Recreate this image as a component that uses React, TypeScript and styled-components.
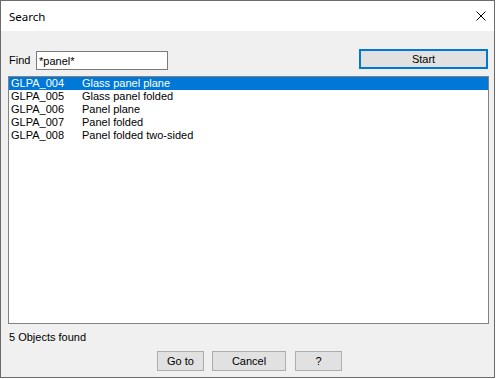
import React, { useState } from 'react'
import styled, { createGlobalStyle } from 'styled-components'

const GlobalStyle = createGlobalStyle`
  html, body {
    margin: 0;
    padding: 0;
    background: #fff;
  }
  * {
    box-sizing: border-box;
  }
`

const Window = styled.div`
  width: 495px;
  height: 378px;
  border: 1px solid #6b6b6b;
  display: flex;
  flex-direction: column;
  font-family: 'Liberation Sans', Arial, sans-serif;
  font-size: 11px;
  color: #000;
`

const TitleBar = styled.div`
  height: 30px;
  flex: none;
  background: #fff;
  display: flex;
  align-items: center;
  padding: 0 8px 0 8px;
  font-family: 'Noto Sans', sans-serif;
  font-size: 11.5px;
`

const CloseIcon = styled.svg`
  margin-left: auto;
  display: block;
`

const Body = styled.div`
  flex: 1;
  background: #f0f0f0;
  display: flex;
  flex-direction: column;
  padding: 18px 5px 6px 7px;
`

const FindRow = styled.div`
  height: 20px;
  display: flex;
  align-items: flex-start;
`

const Label = styled.label`
  width: 28px;
  padding-left: 1px;
  margin-top: 2px;
  line-height: 19px;
`

const Input = styled.input`
  width: 132px;
  height: 19px;
  margin: 2px 0 0;
  padding: 0 2px;
  border: 1px solid #7a7a7a;
  background: #fff;
  font: inherit;
  color: #000;
  outline: none;
`

const Button = styled.button<{ $w: number; $primary?: boolean }>`
  width: ${(p) => p.$w}px;
  height: 20px;
  padding: 0;
  background: #e1e1e1;
  border: ${(p) => (p.$primary ? '2px solid #0078d7' : '1px solid #adadad')};
  font: inherit;
  color: #000;
  line-height: 16px;
  cursor: pointer;
`

const StartButton = styled(Button)`
  margin-left: auto;
  margin-right: 1px;
`

const List = styled.div`
  margin-top: 7px;
  width: 481px;
  height: 248px;
  border: 1px solid #828282;
  background: #fff;
  overflow: hidden;
`

const Row = styled.div<{ $selected?: boolean }>`
  height: 13px;
  line-height: 13px;
  display: flex;
  padding-left: 2px;
  background: ${(p) => (p.$selected ? '#0078d7' : 'transparent')};
  color: ${(p) => (p.$selected ? '#fff' : '#000')};
  cursor: default;
`

const IdCell = styled.span`
  width: 71px;
`

const NameCell = styled.span``

const Status = styled.div`
  margin-top: 7px;
  height: 13px;
  line-height: 13px;
  padding-left: 1px;
`

const ButtonBar = styled.div`
  margin-top: 7px;
  display: flex;
  justify-content: center;
  gap: 8px;
  padding-left: 2px;

  & > :last-child {
    margin-left: 1px;
  }
`

const items = [
  { id: 'GLPA_004', name: 'Glass panel plane' },
  { id: 'GLPA_005', name: 'Glass panel folded' },
  { id: 'GLPA_006', name: 'Panel plane' },
  { id: 'GLPA_007', name: 'Panel folded' },
  { id: 'GLPA_008', name: 'Panel folded two-sided' },
]

const App = () => {
  const [query, setQuery] = useState('*panel*')
  const [selected, setSelected] = useState(0)

  return (
    <>
      <GlobalStyle />
      <Window>
        <TitleBar>
          Search
          <CloseIcon width="10" height="10" viewBox="0 0 10 10">
            <path d="M0.5 0.5L9.5 9.5M9.5 0.5L0.5 9.5" stroke="#000" strokeWidth="1" />
          </CloseIcon>
        </TitleBar>
        <Body>
          <FindRow>
            <Label>Find</Label>
            <Input value={query} onChange={(e) => setQuery(e.target.value)} />
            <StartButton $w={129} $primary>
              Start
            </StartButton>
          </FindRow>
          <List>
            {items.map((it, i) => (
              <Row key={it.id} $selected={i === selected} onClick={() => setSelected(i)}>
                <IdCell>{it.id}</IdCell>
                <NameCell>{it.name}</NameCell>
              </Row>
            ))}
          </List>
          <Status>{items.length} Objects found</Status>
          <ButtonBar>
            <Button $w={47}>Go to</Button>
            <Button $w={74}>Cancel</Button>
            <Button $w={47}>?</Button>
          </ButtonBar>
        </Body>
      </Window>
    </>
  )
}

export default App
